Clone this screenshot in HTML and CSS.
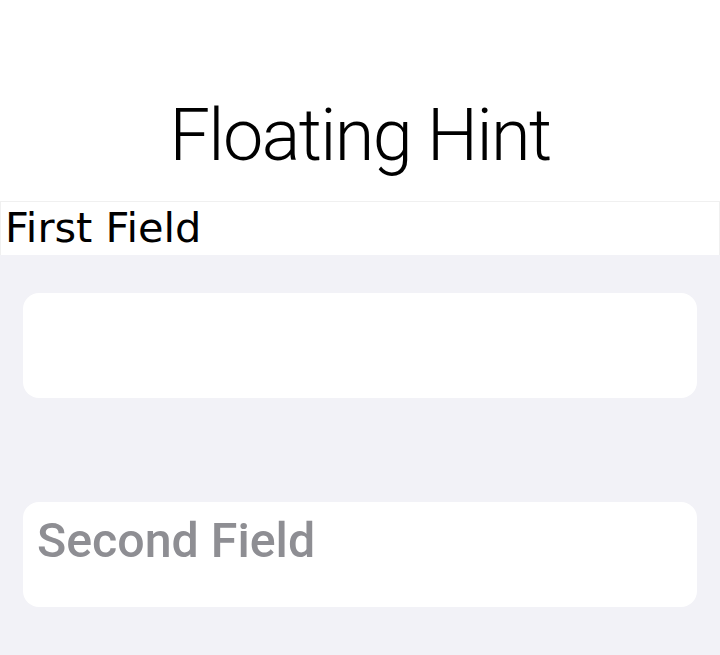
FILE: index.html
```html
<!DOCTYPE html>
<html lang="en">
  <head>
    <meta charset="UTF-8" />
    <meta name="viewport" content="width=device-width, initial-scale=1.0" />
    <title>Floating Hint</title>
    <link rel="stylesheet" href="styles.css">
  </head>
  <body>
    <header class="top">
      <h1 class="title">Floating Hint</h1>
      <div class="first-field">First Field</div>
    </header>
    <main class="group">
      <div class="card"></div>
      <div class="card">
        <span class="hint">Second Field</span>
      </div>
    </main>
  </body>
</html>
```

FILE: styles.css
```css
html,
body {
  margin: 0;
  height: 100%;
}
body {
  display: flex;
  flex-direction: column;
  background: #f2f2f7;
}
.top {
  background: #fff;
}
.title {
  margin: 0;
  padding-top: 100px;
  height: 201px;
  box-sizing: border-box;
  font-family: Roboto, sans-serif;
  font-weight: 300;
  font-size: 72px;
  line-height: 72px;
  letter-spacing: -1.6px;
  text-align: center;
  color: #000;
}
.first-field {
  height: 54px;
  box-sizing: border-box;
  border: 1px solid #f0f0f0;
  border-bottom: none;
  padding-left: 4px;
  font-family: "DejaVu Sans", sans-serif;
  font-size: 41.5px;
  line-height: 52px;
  color: #000;
}
.group {
  flex: 1;
  padding: 38px 23px 0;
  display: flex;
  flex-direction: column;
  gap: 104px;
}
.card {
  height: 105px;
  background: #fff;
  border-radius: 16px;
}
.hint {
  display: block;
  padding: 14px 0 0 14px;
  font-family: Roboto, sans-serif;
  font-weight: 500;
  font-size: 48.3px;
  line-height: 50px;
  color: #8e8e93;
}
```
